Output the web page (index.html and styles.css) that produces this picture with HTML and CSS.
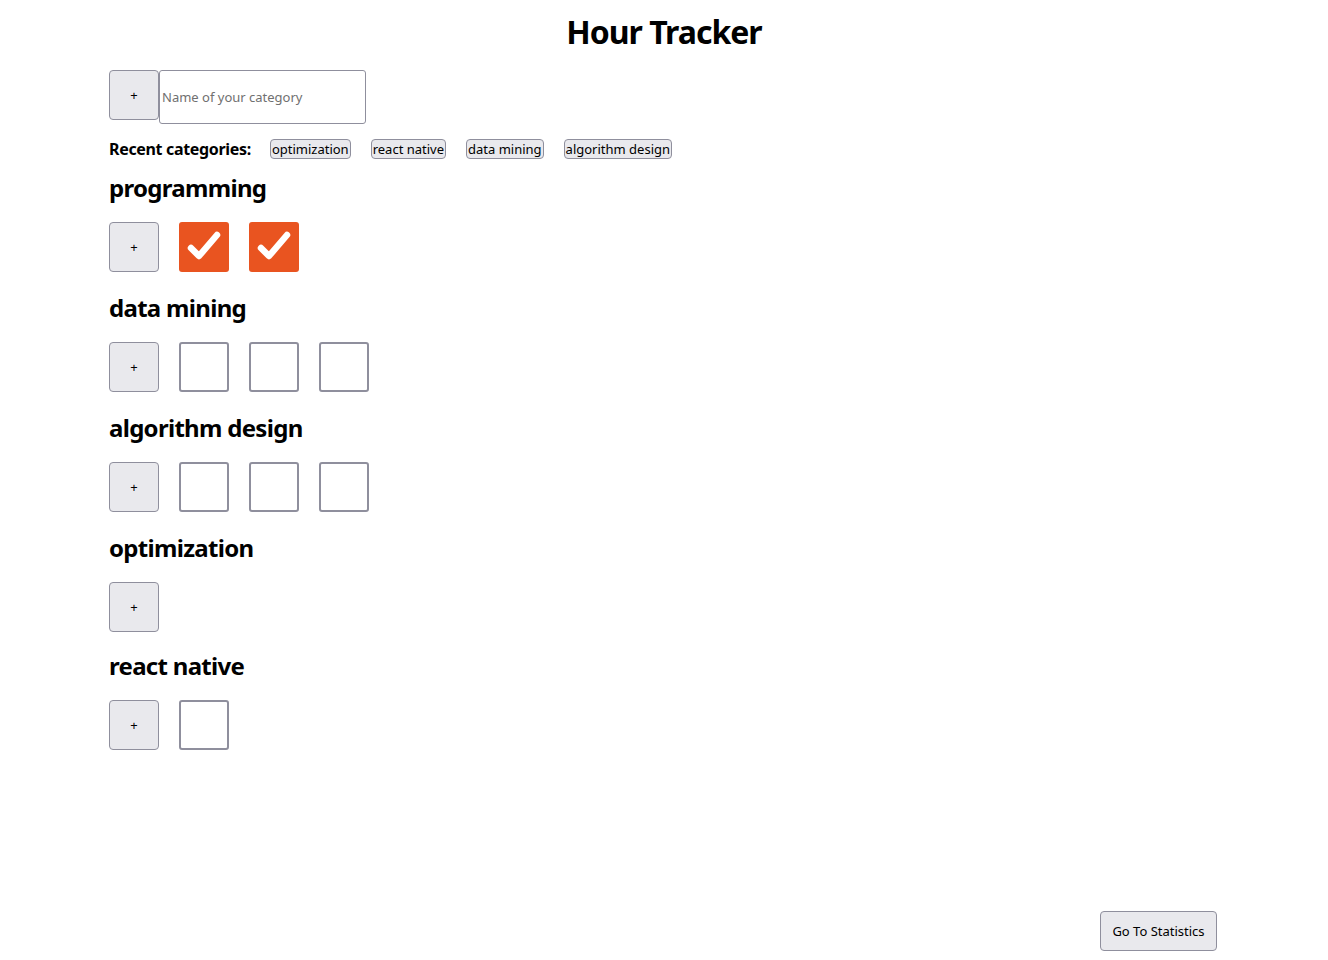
FILE: index.html
```html
<!DOCTYPE html>
<html lang="en">
<head>
<meta charset="utf-8">
<title>Hour Tracker</title>
<link rel="stylesheet" href="styles.css">
</head>
<body>
<main class="container">
  <h1 class="title">Hour Tracker</h1>
  <div class="add-row">
    <button class="btn btn-square">+</button>
    <input class="cat-input" type="text" placeholder="Name of your category">
  </div>
  <div class="recent">
    <span class="recent-label">Recent categories:</span>
    <button class="chip">optimization</button>
    <button class="chip">react native</button>
    <button class="chip">data mining</button>
    <button class="chip">algorithm design</button>
  </div>

  <section class="category">
    <h2 class="cat-title">programming</h2>
    <div class="cat-row">
      <button class="btn btn-square">+</button>
      <span class="box checked"><svg viewBox="0 0 50 50" width="50" height="50"><path d="M12 26 L20 34 L38 13" fill="none" stroke="#fff" stroke-width="6.5" stroke-linecap="round" stroke-linejoin="round"/></svg></span>
      <span class="box checked"><svg viewBox="0 0 50 50" width="50" height="50"><path d="M12 26 L20 34 L38 13" fill="none" stroke="#fff" stroke-width="6.5" stroke-linecap="round" stroke-linejoin="round"/></svg></span>
    </div>
  </section>

  <section class="category">
    <h2 class="cat-title">data mining</h2>
    <div class="cat-row">
      <button class="btn btn-square">+</button>
      <span class="box"></span>
      <span class="box"></span>
      <span class="box"></span>
    </div>
  </section>

  <section class="category">
    <h2 class="cat-title">algorithm design</h2>
    <div class="cat-row">
      <button class="btn btn-square">+</button>
      <span class="box"></span>
      <span class="box"></span>
      <span class="box"></span>
    </div>
  </section>

  <section class="category">
    <h2 class="cat-title">optimization</h2>
    <div class="cat-row">
      <button class="btn btn-square">+</button>
    </div>
  </section>

  <section class="category">
    <h2 class="cat-title">react native</h2>
    <div class="cat-row">
      <button class="btn btn-square">+</button>
      <span class="box"></span>
    </div>
  </section>

  <footer class="footer">
    <button class="btn btn-stats">Go To Statistics</button>
  </footer>
</main>
</body>
</html>
```

FILE: styles.css
```css
html, body {
  margin: 0;
  padding: 0;
  background: #fff;
}

body {
  font-family: "Noto Sans", "Open Sans", sans-serif;
  color: #000;
}

.container {
  width: 1110px;
  margin: 0 auto;
  min-height: 100vh;
  display: flex;
  flex-direction: column;
  box-sizing: border-box;
}

.title {
  font-size: 32px;
  line-height: 38px;
  font-weight: 700;
  text-align: center;
  margin: 13px 0 19px;
  letter-spacing: -1px;
}

.btn {
  background: #e9e9ed;
  border: 1px solid #8f8f9d;
  border-radius: 4px;
  font-family: inherit;
  font-size: 13px;
  color: #000;
  padding: 0;
  box-sizing: border-box;
}

.btn-square {
  width: 50px;
  height: 50px;
  flex: none;
}

.add-row {
  display: flex;
  align-items: flex-start;
}

.cat-input {
  width: 207px;
  height: 54px;
  box-sizing: border-box;
  border: 1px solid #8f8f9d;
  border-radius: 3px;
  padding: 0 2px;
  margin: 0;
  font-family: inherit;
  font-size: 13px;
  color: #000;
}

.cat-input::placeholder {
  color: #707070;
}

.recent {
  display: flex;
  align-items: center;
  height: 20px;
  margin-top: 15px;
  gap: 20px;
}

.recent-label {
  font-size: 16px;
  font-weight: 700;
  letter-spacing: -0.33px;
  margin-right: -1px;
}

.chip {
  background: #e9e9ed;
  border: 1px solid #8f8f9d;
  border-radius: 4px;
  font-family: inherit;
  font-size: 13px;
  line-height: 16px;
  padding: 1px 1px;
  color: #000;
  height: 20px;
  box-sizing: border-box;
}

.category {
  display: flex;
  flex-direction: column;
}

.recent + .category .cat-title {
  margin-top: 15px;
}

.cat-title {
  font-size: 24px;
  line-height: 28px;
  font-weight: 700;
  letter-spacing: -0.7px;
  margin: 0 0 20px;
}

.cat-row {
  display: flex;
  align-items: flex-start;
  gap: 20px;
  margin-bottom: 20px;
}

.box {
  width: 50px;
  height: 50px;
  box-sizing: border-box;
  border: 2px solid #8f8f9d;
  border-radius: 3px;
  background: #fff;
  margin-bottom: 2px;
  display: block;
  flex: none;
}

.box.checked {
  background: #e95420;
  border: none;
}

.box svg {
  display: block;
}

.footer {
  margin-top: auto;
  display: flex;
  justify-content: flex-end;
  padding: 0 2px 9px 0;
}

.btn-stats {
  width: 117px;
  height: 40px;
}
```
